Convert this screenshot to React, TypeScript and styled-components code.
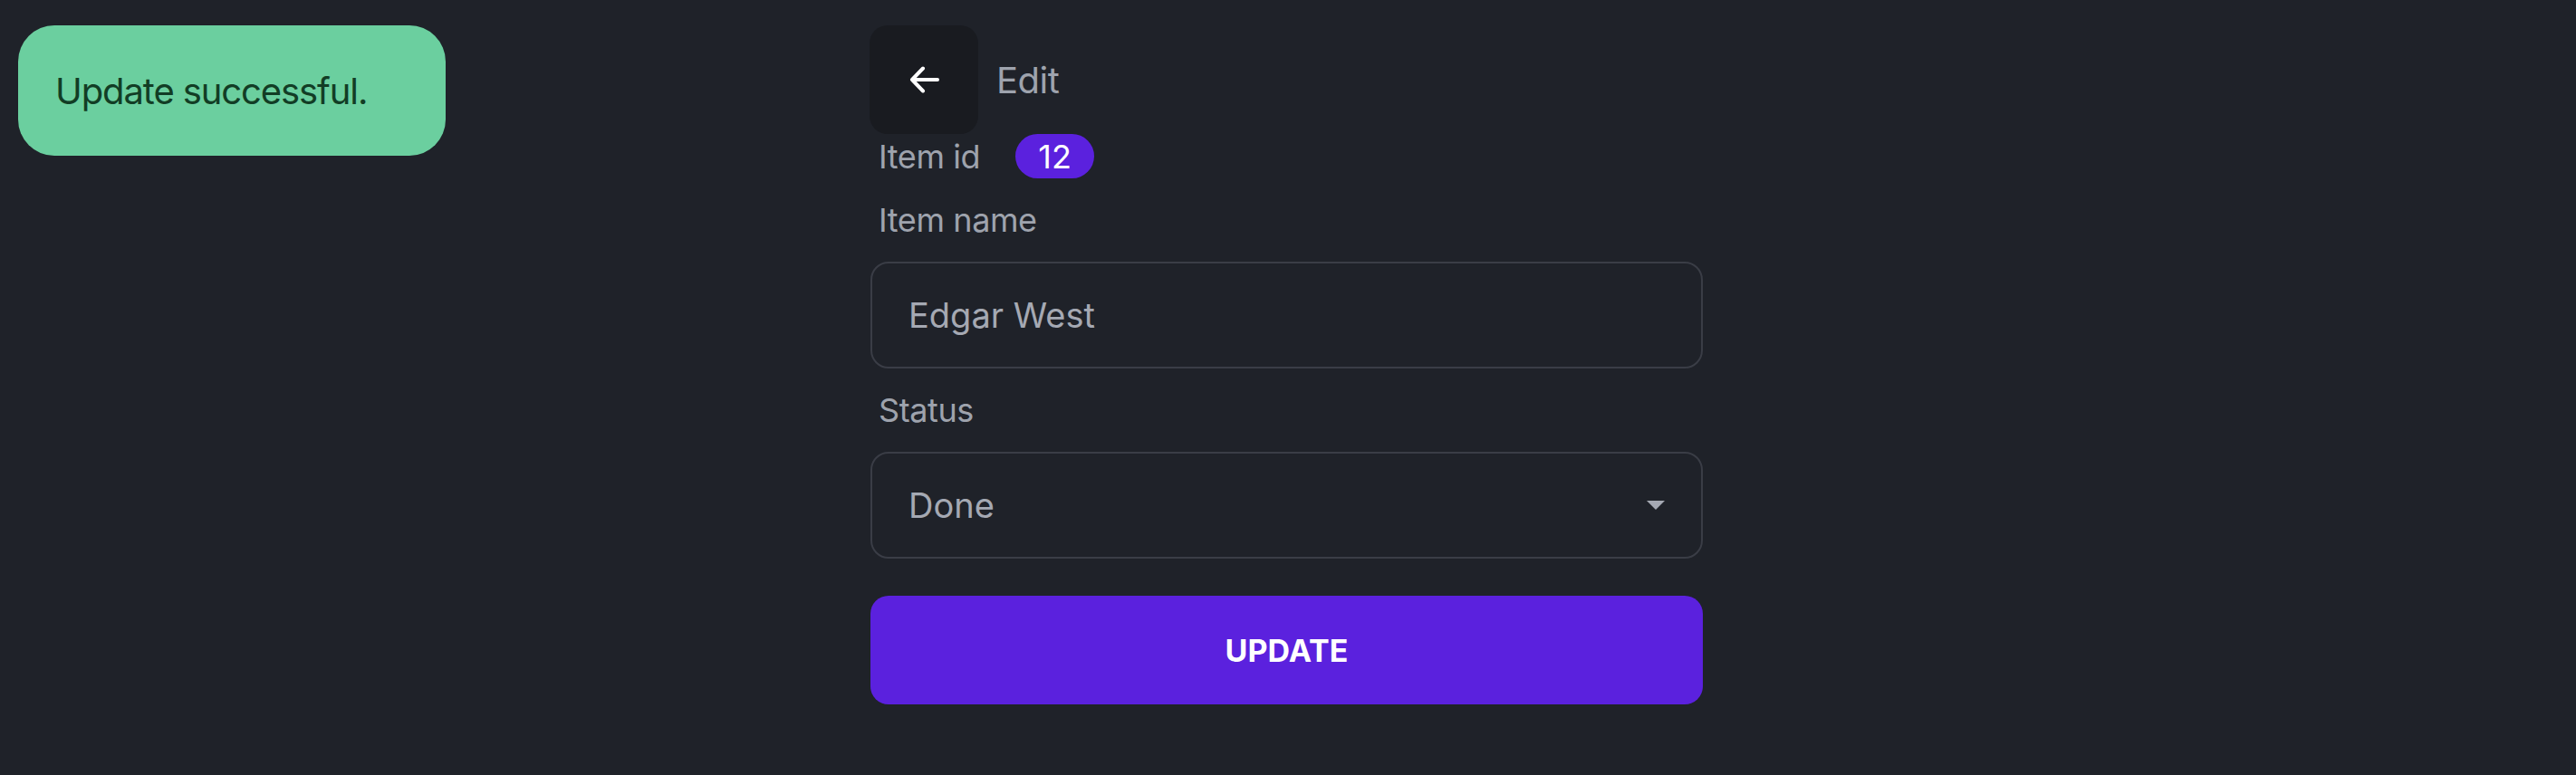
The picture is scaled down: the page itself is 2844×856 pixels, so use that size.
import React from "react";
import styled, { createGlobalStyle } from "styled-components";

const GlobalStyle = createGlobalStyle`
  html, body {
    margin: 0;
    padding: 0;
    background: #1f2229;
  }
  body {
    font-family: Inter, "Noto Sans", "Liberation Sans", sans-serif;
    letter-spacing: -0.025em;
  }
  * { box-sizing: border-box; }
`;

const Page = styled.div`
  position: relative;
  min-height: 856px;
  padding-top: 28px;
  padding-right: 3px;
  display: flex;
  justify-content: center;
`;

const Toast = styled.div`
  position: absolute;
  left: 20px;
  top: 28px;
  width: 472px;
  height: 144px;
  border-radius: 40px;
  background: #6bcf9f;
  color: #123d25;
  font-size: 40px;
  letter-spacing: -1.1px;
  display: flex;
  align-items: center;
  padding-left: 41px;
`;

const Form = styled.div`
  width: 919px;
  display: flex;
  flex-direction: column;
`;

const Header = styled.div`
  display: flex;
  align-items: center;
  gap: 20px;
  margin-left: -1px;
`;

const BackButton = styled.button`
  width: 120px;
  height: 120px;
  border: none;
  border-radius: 20px;
  background: #191b20;
  display: flex;
  align-items: center;
  justify-content: center;
  padding: 0;
  cursor: pointer;
`;

const Title = styled.span`
  font-size: 40px;
  letter-spacing: -0.5px;
  color: #9ea3ad;
`;

const IdRow = styled.div`
  height: 49px;
  display: flex;
  align-items: center;
  gap: 39px;
  padding-left: 9px;
`;

const Label = styled.div`
  font-size: 36px;
  line-height: 44px;
  color: #9ea3ad;
`;

const FieldLabel = styled(Label)`
  margin: 24px 0;
  padding-left: 9px;
`;

const Badge = styled.span`
  height: 49px;
  padding: 0 25px;
  border-radius: 25px;
  background: #5b21de;
  color: #ffffff;
  font-size: 36px;
  letter-spacing: 0;
  display: inline-flex;
  align-items: center;
`;

const Box = styled.div`
  height: 118px;
  border: 2px solid #3a3d46;
  border-radius: 20px;
  display: flex;
  align-items: center;
  justify-content: space-between;
  padding: 0 40px;
  font-size: 38px;
  letter-spacing: 0;
  color: #a5a9b3;
`;

const Caret = styled.span`
  width: 0;
  height: 0;
  border-left: 10px solid transparent;
  border-right: 10px solid transparent;
  border-top: 10px solid #a5a9b3;
`;

const SubmitButton = styled.button`
  margin-top: 41px;
  height: 120px;
  border: none;
  border-radius: 20px;
  background: #5b21de;
  color: #ffffff;
  font-family: inherit;
  font-size: 34px;
  font-weight: 700;
  text-transform: uppercase;
  letter-spacing: 0;
  cursor: pointer;
`;

const ArrowIcon = () => (
  <svg width="38" height="36" viewBox="0 0 38 36" fill="none">
    <path
      d="M6 18H34M6 18L18 5.5M6 18L18 30.5"
      stroke="#ffffff"
      strokeWidth="4"
      strokeLinecap="round"
      strokeLinejoin="round"
    />
  </svg>
);

export default function App() {
  return (
    <>
      <GlobalStyle />
      <Page>
        <Toast>Update successful.</Toast>
        <Form>
          <Header>
            <BackButton aria-label="Back">
              <ArrowIcon />
            </BackButton>
            <Title>Edit</Title>
          </Header>
          <IdRow>
            <Label>Item id</Label>
            <Badge>12</Badge>
          </IdRow>
          <FieldLabel>Item name</FieldLabel>
          <Box>Edgar West</Box>
          <FieldLabel>Status</FieldLabel>
          <Box>
            <span>Done</span>
            <Caret />
          </Box>
          <SubmitButton>Update</SubmitButton>
        </Form>
      </Page>
    </>
  );
}
